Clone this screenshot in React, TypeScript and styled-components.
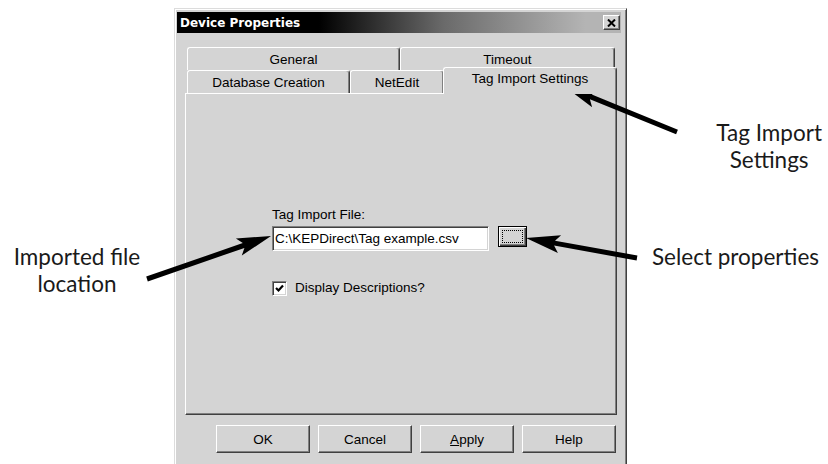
import styled, { createGlobalStyle } from "styled-components"

const GlobalStyle = createGlobalStyle`
  html, body {
    margin: 0;
    padding: 0;
    background: #fff;
  }
  body {
    overflow: hidden;
  }
`

type Pt = [number, number]

// arrows drawn over the screenshot, tail -> tip
const arrows: Array<{ from: Pt; to: Pt }> = [
  { from: [677, 132], to: [564, 86] },
  { from: [147, 279], to: [271, 236] },
  { from: [637, 258], to: [526, 238] }
]

const arrowPoints = (from: Pt, to: Pt, w = 5, hl = 34, hw = 18) => {
  const dx = to[0] - from[0]
  const dy = to[1] - from[1]
  const len = Math.hypot(dx, dy)
  const ux = dx / len
  const uy = dy / len
  const px = -uy
  const py = ux
  const bx = to[0] - ux * hl
  const by = to[1] - uy * hl
  const nx = to[0] - ux * (hl - 5)
  const ny = to[1] - uy * (hl - 5)
  const pts: Pt[] = [
    [from[0] + (px * w) / 2, from[1] + (py * w) / 2],
    [nx + (px * w) / 2, ny + (py * w) / 2],
    [bx + (px * hw) / 2, by + (py * hw) / 2],
    to,
    [bx - (px * hw) / 2, by - (py * hw) / 2],
    [nx - (px * w) / 2, ny - (py * w) / 2],
    [from[0] - (px * w) / 2, from[1] - (py * w) / 2]
  ]
  return pts.map((p) => p.map((v) => v.toFixed(1)).join(",")).join(" ")
}

export default function App() {
  return (
    <>
      <GlobalStyle />
      <Page>
        <LeftCol>
          <Note>
            Imported file
            <br />
            location
          </Note>
        </LeftCol>

        <Dialog>
          <TitleBar>
            <Title>Device Properties</Title>
            <CloseButton aria-label="Close">
              <svg width="9" height="8" viewBox="0 0 9 8">
                <path d="M1 0.5 L8 7.5 M8 0.5 L1 7.5" stroke="#000" strokeWidth="2" />
              </svg>
            </CloseButton>
          </TitleBar>

          <Body>
            <TabRow>
              <Tab $w={213}>General</Tab>
              <Tab $w={215}>Timeout</Tab>
            </TabRow>
            <TabRow>
              <Tab $w={163}>Database Creation</Tab>
              <Tab $w={94}>NetEdit</Tab>
              <Tab $w={174} $active>Tag Import Settings</Tab>
            </TabRow>

            <Panel>
              <Label>Tag Import File:</Label>
              <FieldRow>
                <Field readOnly value="C:\KEPDirect\Tag example.csv" />
                <BrowseButton aria-label="Browse">
                  <FocusRect />
                </BrowseButton>
              </FieldRow>
              <CheckRow>
                <CheckBox>
                  <svg width="9" height="9" viewBox="0 0 9 9">
                    <path d="M1 4 L3.5 6.5 L8 1.5" stroke="#000" strokeWidth="2.2" fill="none" />
                  </svg>
                </CheckBox>
                <span>Display Descriptions?</span>
              </CheckRow>
            </Panel>

            <ButtonRow>
              <Button>OK</Button>
              <Button>Cancel</Button>
              <Button>
                <u>A</u>pply
              </Button>
              <Button>Help</Button>
            </ButtonRow>
          </Body>
        </Dialog>

        <RightCol>
          <Note $align="flex-end" $right={6}>
            Tag Import
            <br />
            Settings
          </Note>
          <Note $top={70} $left={16}>
            Select properties
          </Note>
        </RightCol>

        <ArrowLayer viewBox="0 0 828 464">
          {arrows.map((a, i) => (
            <polygon key={i} points={arrowPoints(a.from, a.to)} fill="#000" />
          ))}
        </ArrowLayer>
      </Page>
    </>
  )
}

const Page = styled.div`
  position: relative;
  width: 828px;
  height: 464px;
  display: grid;
  grid-template-columns: 174px 453px 1fr;
  overflow: hidden;
  background: #fff;
`

const LeftCol = styled.div`
  padding: 243px 20px 0 0;
`

const RightCol = styled.div`
  display: flex;
  flex-direction: column;
  padding-top: 119px;
`

const Note = styled.div<{ $align?: string; $right?: number; $top?: number; $left?: number }>`
  align-self: ${(p) => p.$align || "stretch"};
  margin: ${(p) => p.$top || 0}px ${(p) => p.$right || 0}px 0 ${(p) => p.$left || 0}px;
  font-family: Lato, "Open Sans", sans-serif;
  font-size: 22.5px;
  line-height: 27px;
  color: #1a1a1a;
  text-align: center;
  white-space: nowrap;
`

const Dialog = styled.div`
  margin-top: 8px;
  height: 470px;
  box-sizing: border-box;
  background: #d4d4d4;
  border: 1px solid;
  border-color: #dcdcdc #404040 #404040 #dcdcdc;
  box-shadow: inset 1px 1px 0 #fff, inset -1px -1px 0 #808080;
  padding: 3px 5px 0 2px;
  font-family: "Liberation Sans", Arial, sans-serif;
  font-size: 13.5px;
  color: #000;
`

const TitleBar = styled.div`
  height: 21px;
  display: flex;
  align-items: center;
  justify-content: space-between;
  padding: 0 1px 0 3px;
  background: linear-gradient(to right, #000 0%, #000 32%, #6a6a6a 60%, #b4b4b4 92%);
`

const Title = styled.span`
  font-family: "DejaVu Sans", Verdana, sans-serif;
  font-weight: bold;
  font-size: 12px;
  color: #fff;
`

const CloseButton = styled.button`
  width: 17px;
  height: 15px;
  box-sizing: border-box;
  padding: 0;
  display: flex;
  align-items: center;
  justify-content: center;
  background: #d4d4d4;
  border: 1px solid;
  border-color: #fff #404040 #404040 #fff;
  box-shadow: inset -1px -1px 0 #808080;
`

const Body = styled.div`
  padding: 14px 4px 0 8px;
`

const TabRow = styled.div`
  display: flex;
  align-items: flex-end;
  height: 23px;
  padding-left: 2px;
`

const Tab = styled.div<{ $w: number; $active?: boolean }>`
  position: relative;
  z-index: ${(p) => (p.$active ? 1 : 0)};
  box-sizing: border-box;
  width: ${(p) => p.$w}px;
  height: ${(p) => (p.$active ? 27 : 23)}px;
  margin-bottom: ${(p) => (p.$active ? -1 : 0)}px;
  margin-left: ${(p) => (p.$active ? -1 : 0)}px;
  padding-top: ${(p) => (p.$active ? 3 : 4)}px;
  background: #d4d4d4;
  border-top: 1px solid #fff;
  border-left: 1px solid #fff;
  border-right: 1px solid #404040;
  box-shadow: inset -1px 0 0 #808080;
  border-radius: 3px 3px 0 0;
  line-height: 16px;
  text-align: center;
  white-space: nowrap;
`

const Panel = styled.div`
  height: 322px;
  box-sizing: border-box;
  border: 1px solid;
  border-color: #fff #404040 #404040 #fff;
  box-shadow: inset -1px -1px 0 #808080;
  padding: 113px 0 0 86px;
`

const Label = styled.div`
  line-height: 16px;
  margin-bottom: 3px;
`

const FieldRow = styled.div`
  display: flex;
  align-items: flex-start;
  gap: 9px;
`

const Field = styled.input`
  width: 217px;
  height: 25px;
  box-sizing: border-box;
  margin: 0;
  padding: 0 2px;
  background: #fff;
  border: 1px solid;
  border-color: #808080 #fff #fff #808080;
  box-shadow: inset 1px 1px 0 #404040, inset -1px -1px 0 #d4d4d4;
  font: inherit;
  color: #000;
  outline: none;
`

const BrowseButton = styled.button`
  width: 29px;
  height: 21px;
  box-sizing: border-box;
  padding: 3px;
  background: #d4d4d4;
  border: 1px solid #000;
  box-shadow: inset 1px 1px 0 #fff, inset -1px -1px 0 #404040, inset -2px -2px 0 #808080;
  display: flex;
`

const FocusRect = styled.span`
  flex: 1;
  border: 1px dotted #000;
`

const CheckRow = styled.div`
  display: flex;
  align-items: center;
  gap: 8px;
  margin-top: 29px;
  line-height: 16px;
`

const CheckBox = styled.span`
  width: 15px;
  height: 15px;
  box-sizing: border-box;
  display: flex;
  align-items: center;
  justify-content: center;
  background: #fff;
  border: 1px solid;
  border-color: #808080 #fff #fff #808080;
  box-shadow: inset 1px 1px 0 #404040, inset -1px -1px 0 #d4d4d4;
`

const ButtonRow = styled.div`
  display: flex;
  justify-content: flex-end;
  gap: 8px;
  margin-top: 10px;
  padding-right: 1px;
`

const Button = styled.button`
  width: 94px;
  height: 28px;
  box-sizing: border-box;
  padding: 0;
  background: #d4d4d4;
  border: 1px solid;
  border-color: #fff #404040 #404040 #fff;
  box-shadow: inset -1px -1px 0 #808080;
  font: inherit;
  color: #000;
`

const ArrowLayer = styled.svg`
  position: absolute;
  inset: 0;
  width: 828px;
  height: 464px;
  pointer-events: none;
`
